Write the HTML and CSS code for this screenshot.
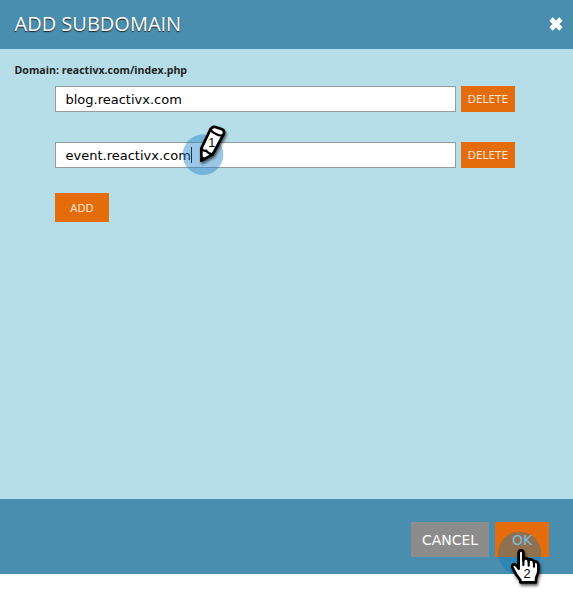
FILE: index.html
```html
<!DOCTYPE html>
<html lang="en">
<head>
<meta charset="utf-8">
<title>Add Subdomain</title>
<link rel="stylesheet" href="styles.css">
</head>
<body>
<div class="dialog">
  <header class="header">
    <h1 class="title">ADD SUBDOMAIN</h1>
    <svg class="close" viewBox="0 0 14 14"><path d="M2 2 12 12M12 2 2 12"/></svg>
  </header>
  <main class="content">
    <p class="domain">Domain: reactivx.com/index.php</p>
    <div class="row"><div class="field"><span class="value">blog.reactivx.com</span></div><button class="button delete">DELETE</button></div>
    <div class="row"><div class="field"><span class="value">event.reactivx.com</span><i class="caret"></i></div><button class="button delete">DELETE</button></div>
    <button class="button add">ADD</button>
  </main>
  <footer class="footer">
    <button class="button cancel">CANCEL</button>
    <button class="button ok">OK</button>
  </footer>
  <svg class="marker pencil" viewBox="0 0 210 210">
    <circle class="halo" cx="99" cy="119" r="61"/>
    <g class="drawn">
      <path class="shape" d="M94 137 94 100 121 44Q126 34 136 36L156 43Q165 47 161 57L128 118Z"/>
      <path class="line" d="M94 101Q99 109 109 107Q114 116 128 118M121 43Q126 53 138 57Q150 64 160 60"/>
      <path class="tip" d="M92 122 108 130 92 139Z"/>
    </g>
    <text x="125" y="96">1</text>
  </svg>
  <svg class="marker hand" viewBox="0 0 270 258">
    <circle class="halo deep" cx="119" cy="130" r="65"/>
    <g class="drawn">
      <path class="shape" d="M116 176V128Q117 121 123 121Q130 121 130 129V151Q132 144 139 145Q146 146 146 153Q149 146 156 149Q162 151 162 158Q166 152 171 156Q175 159 175 166V181Q175 190 171 197Q168 203 168 210V217H121V210Q115 203 110 196L98 174Q94 165 101 163Q108 162 116 176Z"/>
      <path class="line" d="M130 150V165M146 153V167M162 157V170"/>
    </g>
    <text x="141" y="204">2</text>
  </svg>
</div>
</body>
</html>
```
FILE: styles.css
```css
* { box-sizing: border-box; }
body { margin: 0; background: #fff; font-family: "DejaVu Sans", sans-serif; }
.dialog { position: relative; width: 573px; height: 596px; }
.header {
  display: flex; justify-content: space-between; align-items: center;
  height: 49px; padding: 0 10.5px 0 14.5px; background: #498eae;
}
.title {
  margin: 0; color: #fff; font: 400 20px/28px "Open Sans", sans-serif;
  text-shadow: 0 1px 1px #222; position: relative; top: -1px;
}
.close { width: 14px; height: 14px; margin-top: -1px; fill: none; stroke: #fff; stroke-width: 4.8; overflow: visible; }
.content { height: 450px; padding: 14px 0 0 55px; background: #b5dee8; }
.domain {
  margin: 0 0 9px -40.5px; color: #222;
  font: 700 10.6px/14px "Open Sans", sans-serif;
}
.row { display: flex; gap: 5px; height: 26px; margin-bottom: 30px; }
.field {
  display: flex; align-items: center; width: 401px; padding-left: 9.5px;
  border: 1px solid #999; background: #fff; color: #000; font-size: 13px;
}
.caret { width: 1px; height: 16px; background: #000; }
.button {
  flex: none; display: flex; align-items: center; justify-content: center;
  margin: 0; padding: 0; border: 0; background: #e56c0b; color: #fff;
  font-family: "DejaVu Sans", sans-serif;
}
.delete { width: 54px; height: 26px; font-size: 10.5px; color: #fbe5d5; }
.add { width: 54px; height: 29px; margin-top: -5px; font-size: 10.5px; color: #fbe5d5; }
.footer {
  display: flex; justify-content: flex-end; align-items: flex-start; gap: 6px;
  height: 75px; padding: 23px 24px 0 0; background: #498eae;
}
.footer .button { height: 35px; font-size: 14px; }
.cancel { width: 78px; background: #8c8c8c; }
.footer .ok { width: 54px; color: #c4e4f6; }
.marker { position: absolute; overflow: visible; pointer-events: none; }
.pencil { left: 170px; top: 115px; width: 70px; height: 70px; }
.hand { left: 480px; top: 510px; width: 90px; height: 86px; }
.halo { fill: #2080c8; fill-opacity: .44; }
.deep { fill: #027ac3; fill-opacity: .38; }
.drawn { filter: drop-shadow(3px 6px 5px rgba(0, 0, 0, .65)); }
.shape { fill: #fff; stroke: #000; stroke-width: 8; stroke-linejoin: round; }
.line { fill: none; stroke: #000; stroke-width: 6.5; stroke-linecap: round; }
.tip { fill: #000; }
.marker text { fill: #000; font: 38px "Liberation Sans", sans-serif; text-anchor: middle; }
```
